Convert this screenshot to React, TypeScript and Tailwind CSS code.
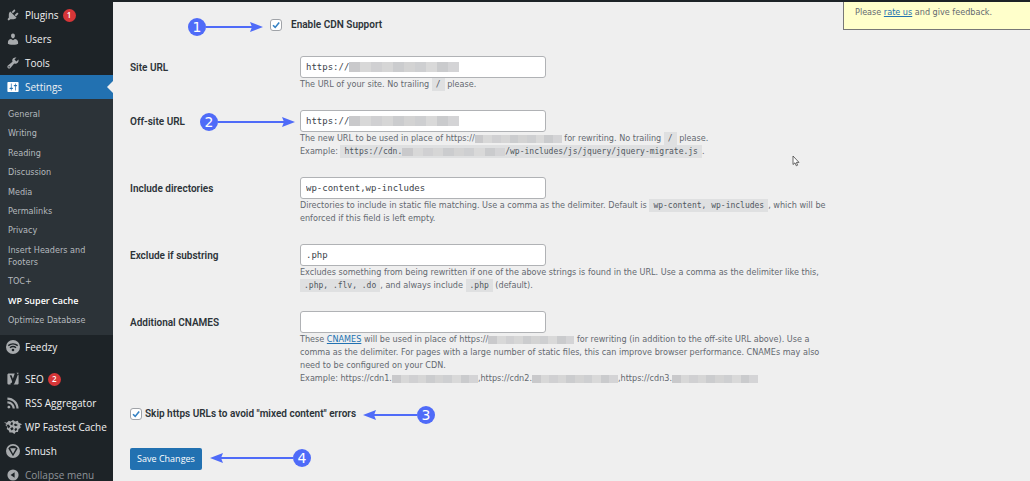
import React, { ReactNode } from "react";
import clsx from "clsx";

const ICONS = {
  plugins:
    "M13.11 4.36L9.87 7.6 8 5.73l3.24-3.24c.35-.34 1.05-.2 1.56.32.52.51.66 1.21.31 1.55zm-8 1.77l.91-1.12 9.01 9.01-1.19.84c-.71.71-2.63 1.16-3.82 1.16H6.14L4.9 17.26c-.59.59-1.54.59-2.12 0-.59-.58-.59-1.53 0-2.12l1.24-1.24v-3.88c0-1.13.4-3.19 1.09-3.89zm7.26 3.97l3.24-3.24c.34-.35 1.04-.21 1.55.31.52.51.66 1.21.31 1.55l-3.24 3.25z",
  users:
    "M10 9.25c-2.27 0-2.73-3.44-2.73-3.44C7 4.02 7.82 2 9.97 2c2.16 0 2.98 2.02 2.71 3.81 0 0-.41 3.44-2.68 3.44zm0 2.57L12.72 10c2.39 0 4.52 2.33 4.52 4.53v2.49s-3.65 1.13-7.24 1.13c-3.65 0-7.24-1.13-7.24-1.13v-2.49c0-2.25 1.94-4.48 4.47-4.48z",
  tools:
    "M16.68 9.77c-1.34 1.34-3.3 1.67-4.95.99l-5.41 6.52c-.99.99-2.59.99-3.58 0s-.99-2.59 0-3.57l6.52-5.42c-.68-1.65-.35-3.61.99-4.95 1.28-1.28 3.12-1.62 4.72-1.06l-2.89 2.89 2.82 2.82 2.86-2.87c.53 1.58.18 3.39-1.08 4.65zM3.81 16.21c.4.39 1.04.39 1.43 0 .4-.4.4-1.04 0-1.43-.39-.4-1.03-.4-1.43 0-.39.39-.39 1.03 0 1.43z",
  settings:
    "M18 16V4c0-.55-.45-1-1-1H3c-.55 0-1 .45-1 1v12c0 .55.45 1 1 1h14c.55 0 1-.45 1-1zM8 11h1c.55 0 1 .45 1 1s-.45 1-1 1H8v1.5c0 .28-.22.5-.5.5s-.5-.22-.5-.5V13H6c-.55 0-1-.45-1-1s.45-1 1-1h1V5.5c0-.28.22-.5.5-.5s.5.22.5.5V11zm5-2h-1c-.55 0-1-.45-1-1s.45-1 1-1h1V5.5c0-.28.22-.5.5-.5s.5.22.5.5V7h1c.55 0 1 .45 1 1s-.45 1-1 1h-1v5.5c0 .28-.22.5-.5.5s-.5-.22-.5-.5V9z",
  feedzy:
    "M10 0a10 10 0 100 20 10 10 0 000-20zm0 16.2a1.9 1.9 0 110-3.8 1.9 1.9 0 010 3.8zm3.6-4.4a5.6 5.6 0 00-7.2 0L5 10.2a7.8 7.8 0 0110 0zm2.5-2.9a9.4 9.4 0 00-12.2 0L2.6 7.3a11.5 11.5 0 0114.8 0z",
  seo: "M4 2h8.5L9.8 9.7 7.9 4.600H5.300l3.200 8.100c.3.700.3 1.300 0 1.900-.3.800-.9 1.300-2 1.500V18H4c-1.100 0-2-.9-2-2V4c0-1.100.9-2 2-2zM15 1h3l-5.300 14c-.6 1.700-1.300 2.500-2.100 3h5.400c1.100 0 2-.9 2-2V5c0-.8-.3-1.300-.8-1.600z",
  rss: "M14.92 18H18C18 9.32 10.82 2.25 2 2.25v3.02c7.12 0 12.92 5.71 12.92 12.73zm-5.44 0h3.08C12.56 12.27 7.82 7.6 2 7.6v3.02c2 0 3.87.77 5.29 2.16C8.7 14.17 9.48 16.03 9.48 18zm-5.35-.02c1.17 0 2.13-.93 2.13-2.09 0-1.15-.96-2.09-2.13-2.09-1.18 0-2.13.94-2.13 2.09 0 1.16.95 2.09 2.13 2.09z",
  cache:
    "M-3 3l4 1 3-3 3 1 3-2 3 2 4-1 1 3 5 2-3 2 1 3-3 2-1 4-3 0-2 3-3-2-4 0-1-3-3-2 1-3-3-3 2-1zM3 6l-2 2 3 4 2-3zm5-3l-2 3 3 2 1-4zm5 2l-2 2 3 2 3-2zm-4 5l-3 2 2 3 3-2zm5 1l-2 3 2 2 2-3z",
  smush:
    "M10 0a10 10 0 100 20 10 10 0 000-20zm0 2.4c3 0 5.5 1.6 6.7 4L10 17.5 3.3 6.400c1.200-2.400 3.700-4 6.700-4zM5.800 6.200l4.200 7.600 4.200-7.600z",
  collapse: "M10 2a8 8 0 100 16 8 8 0 000-16zm2.3 12L6.5 10l5.8-4z",
};

type IconName = keyof typeof ICONS;

const Icon = ({ name }: { name: IconName }) => (
  <svg
    viewBox="0 0 20 20"
    className="size-[14px] shrink-0 overflow-visible"
    fill="currentColor"
    fillRule="evenodd"
    aria-hidden="true"
  >
    <path d={ICONS[name]} />
  </svg>
);

type MenuItemProps = {
  icon: IconName;
  label: string;
  count?: number;
  active?: boolean;
  muted?: boolean;
};

const MenuItem = ({ icon, label, count, active, muted }: MenuItemProps) => (
  <a
    href="#"
    className={clsx(
      "relative flex h-6 items-center gap-[5px] pl-[6px] whitespace-nowrap",
      active ? "bg-[#2271b1] text-white" : "text-[#a7aaad]"
    )}
  >
    <Icon name={icon} />
    <span className={clsx("text-[10px]", muted ? "text-[#8f9499]" : "text-[#f0f0f1]")}>
      {label}
    </span>
    {count && (
      <span className="-ml-px flex size-[13px] items-center justify-center rounded-full bg-[#d63638] text-[8px] font-semibold text-white">
        {count}
      </span>
    )}
    {active && (
      <span className="absolute top-[6px] right-0 border-y-[6px] border-r-[6px] border-y-transparent border-r-[#efefef]" />
    )}
  </a>
);

const SUBMENU = [
  "General",
  "Writing",
  "Reading",
  "Discussion",
  "Media",
  "Permalinks",
  "Privacy",
  "Insert Headers and Footers",
  "TOC+",
  "WP Super Cache",
  "Optimize Database",
];

const Sidebar = () => (
  <nav className="w-[113px] shrink-0 overflow-hidden bg-[#1d2327] pt-[1px]">
    <MenuItem icon="plugins" label="Plugins" count={1} />
    <MenuItem icon="users" label="Users" />
    <MenuItem icon="tools" label="Tools" />
    <MenuItem icon="settings" label="Settings" active />
    <ul className="flex h-[236px] flex-col justify-between bg-[#2c3338] py-[9px] pr-6 pl-2 font-['DejaVu_Sans_Condensed'] text-[9px] leading-3 text-[#b4b9be]">
      {SUBMENU.map((item) => (
        <li key={item}>
          <a
            href="#"
            className={clsx(
              "block",
              item === "WP Super Cache" && "font-['Open_Sans'] font-semibold text-white",
              item !== "Insert Headers and Footers" && "whitespace-nowrap"
            )}
          >
            {item}
          </a>
        </li>
      ))}
    </ul>
    <MenuItem icon="feedzy" label="Feedzy" />
    <div className="h-2" />
    <MenuItem icon="seo" label="SEO" count={2} />
    <MenuItem icon="rss" label="RSS Aggregator" />
    <MenuItem icon="cache" label="WP Fastest Cache" />
    <MenuItem icon="smush" label="Smush" />
    <MenuItem icon="collapse" label="Collapse menu" muted />
  </nav>
);

const SHADES = [
  "bg-[#c9c9cb]",
  "bg-[#d8d8d8]",
  "bg-[#d0d0d2]",
  "bg-[#d6d6d6]",
  "bg-[#cbccce]",
  "bg-[#d3d3d3]",
  "bg-[#cecfd1]",
  "bg-[#d9d9d9]",
  "bg-[#cacbcd]",
  "bg-[#d4d4d6]",
];

// Pixelated block that hides a domain name
const Redacted = ({ className }: { className: string }) => (
  <span className={clsx("inline-flex overflow-hidden align-middle", className)}>
    {SHADES.map((shade) => (
      <span key={shade} className={clsx("flex-1", shade)} />
    ))}
  </span>
);

const Code = ({ children }: { children: ReactNode }) => (
  <code className="inline-block bg-[#dfe0e1] px-1 font-['DejaVu_Sans_Mono'] text-[8px] leading-[13px] text-[#50575e]">
    {children}
  </code>
);

type FieldProps = {
  id: string;
  label: string;
  value?: string;
  redacted?: boolean;
  children: ReactNode;
};

const Field = ({ id, label, value = "", redacted, children }: FieldProps) => (
  <div className="flex">
    <label
      htmlFor={id}
      className="w-[170px] shrink-0 pt-[6px] font-[Roboto] text-[10px] leading-3 font-semibold text-[#2c3338]"
    >
      {label}
    </label>
    <div className="min-w-0">
      <div className="relative">
        <input
          id={id}
          type="text"
          defaultValue={value}
          className="block h-[22px] w-[246px] rounded-[3px] border border-[#b0b2b5] bg-white px-[5px] font-['DejaVu_Sans_Mono'] text-[9px] text-[#3c434a]"
        />
        {redacted && <Redacted className="absolute top-[6px] left-[49px] h-[10px] w-[110px]" />}
      </div>
      <p className="font-['DejaVu_Sans_Condensed'] text-[9px] leading-[13px] whitespace-nowrap text-[#646970]">
        {children}
      </p>
    </div>
  </div>
);

const Checkbox = ({ id }: { id: string }) => (
  <span className="grid size-3 shrink-0">
    <input
      id={id}
      type="checkbox"
      defaultChecked
      className="col-start-1 row-start-1 size-3 appearance-none rounded-[3px] border border-[#a0a3a8] bg-white"
    />
    <svg
      viewBox="0 0 12 12"
      className="pointer-events-none col-start-1 row-start-1 size-3"
      fill="none"
      stroke="#3582c4"
      strokeWidth="1.6"
      aria-hidden="true"
    >
      <path d="M3 6.2l2.2 2.2L9.2 3.4" />
    </svg>
  </span>
);

type CalloutProps = {
  step: number;
  className: string;
  left?: boolean;
};

// Numbered step marker with an arrow
const Callout = ({ step, className, left }: CalloutProps) => (
  <div className={clsx("absolute flex items-center", left && "flex-row-reverse", className)}>
    <span className="flex size-[18px] shrink-0 items-center justify-center rounded-full bg-[#4f6bf8] font-['DejaVu_Sans'] text-[14px] leading-none text-white">
      {step}
    </span>
    <span className="h-[2px] flex-1 bg-[#4f6bf8]" />
    <svg
      viewBox="0 0 13 10"
      className={clsx("-ml-[2px] h-[10px] w-[13px] shrink-0", left && "-mr-[2px] ml-0 rotate-180")}
      fill="#4f6bf8"
      aria-hidden="true"
    >
      <path d="M0 0l13 5-13 5 2-5z" />
    </svg>
  </div>
);

const SettingsForm = () => (
  <form className="px-[17px]" onSubmit={(e) => e.preventDefault()}>
    <div className="flex flex-col gap-[19px]">
      <Field id="site_url" label="Site URL" value="https://" redacted>
        The URL of your site. No trailing <Code>/</Code> please.
      </Field>
      <Field id="off_site_url" label="Off-site URL" value="https://" redacted>
        The new URL to be used in place of https://
        <Redacted className="h-[8px] w-[87px]" /> for rewriting. No trailing <Code>/</Code> please.
        <br />
        Example:{" "}
        <Code>
          https://cdn.
          <Redacted className="h-[8px] w-[103px]" />
          /wp-includes/js/jquery/jquery-migrate.js
        </Code>
        .
      </Field>
      <Field id="include_dirs" label="Include directories" value="wp-content,wp-includes">
        Directories to include in static file matching. Use a comma as the delimiter. Default is{" "}
        <Code>wp-content, wp-includes</Code>, which will be
        <br />
        enforced if this field is left empty.
      </Field>
      <Field id="exclude" label="Exclude if substring" value=".php">
        Excludes something from being rewritten if one of the above strings is found in the URL. Use
        a comma as the delimiter like this,
        <br />
        <Code>.php, .flv, .do</Code>, and always include <Code>.php</Code> (default).
      </Field>
      <Field id="cnames" label="Additional CNAMES">
        These{" "}
        <a href="#" className="text-[#2271b1] underline">
          CNAMES
        </a>{" "}
        will be used in place of https://
        <Redacted className="h-[8px] w-[86px]" /> for rewriting (in addition to the off-site URL
        above). Use a
        <br />
        comma as the delimiter. For pages with a large number of static files, this can improve
        browser performance. CNAMEs may also
        <br />
        need to be configured on your CDN.
        <br />
        Example: https://cdn1.
        <Redacted className="h-[8px] w-[86px]" />
        ,https://cdn2.
        <Redacted className="h-[8px] w-[86px]" />
        ,https://cdn3.
        <Redacted className="h-[8px] w-[86px]" />
      </Field>
    </div>

    <div className="mt-[23px] flex items-center gap-[3px]">
      <Checkbox id="skip_https" />
      <label
        htmlFor="skip_https"
        className="font-[Roboto] text-[10px] leading-3 font-semibold text-[#2c3338]"
      >
        Skip https URLs to avoid "mixed content" errors
      </label>
    </div>

    <button
      type="submit"
      className="mt-7 flex h-[22px] w-[72px] items-center justify-center rounded-[2px] bg-[#2271b1] text-[9px] whitespace-nowrap text-white"
    >
      Save Changes
    </button>
  </form>
);

export default function App() {
  return (
    <div className="relative flex h-screen flex-col overflow-hidden bg-[#efefef] font-['Open_Sans',sans-serif]">
      <header className="h-[2px] shrink-0 bg-[#1d2327]" />
      <div className="flex min-h-0 flex-1">
        <Sidebar />
        <main className="min-w-0 flex-1">
          <div className="flex h-[54px] items-start justify-between">
            <div className="flex items-center gap-[9px] pt-[17px] pl-[157px]">
              <Checkbox id="enable_cdn" />
              <label
                htmlFor="enable_cdn"
                className="font-[Roboto] text-[10px] leading-3 font-semibold text-[#2c3338]"
              >
                Enable CDN Support
              </label>
            </div>
            <aside className="h-7 w-[187px] border-b border-l border-[#777] bg-[#ffffcb] pt-1 pl-[11px] font-['DejaVu_Sans_Condensed'] text-[9px] leading-[13px] text-[#646970]">
              Please{" "}
              <a href="#" className="text-[#2271b1] underline">
                rate us
              </a>{" "}
              and give feedback.
            </aside>
          </div>
          <SettingsForm />
        </main>
      </div>

      <Callout step={1} className="top-[18px] left-[188px] w-[75px]" />
      <Callout step={2} className="top-[113px] left-[200px] w-[95px]" />
      <Callout step={3} className="top-[406px] left-[363px] w-[72px]" left />
      <Callout step={4} className="top-[449px] left-[210px] w-[101px]" left />

      <svg
        viewBox="0 0 8 12"
        className="absolute top-[155px] left-[792px] h-3 w-2"
        fill="white"
        stroke="#444"
        strokeWidth="0.8"
        aria-hidden="true"
      >
        <path d="M1 1v8.5l2-1.7 1.3 3 1.3-.6-1.2-2.8H7z" />
      </svg>
    </div>
  );
}
